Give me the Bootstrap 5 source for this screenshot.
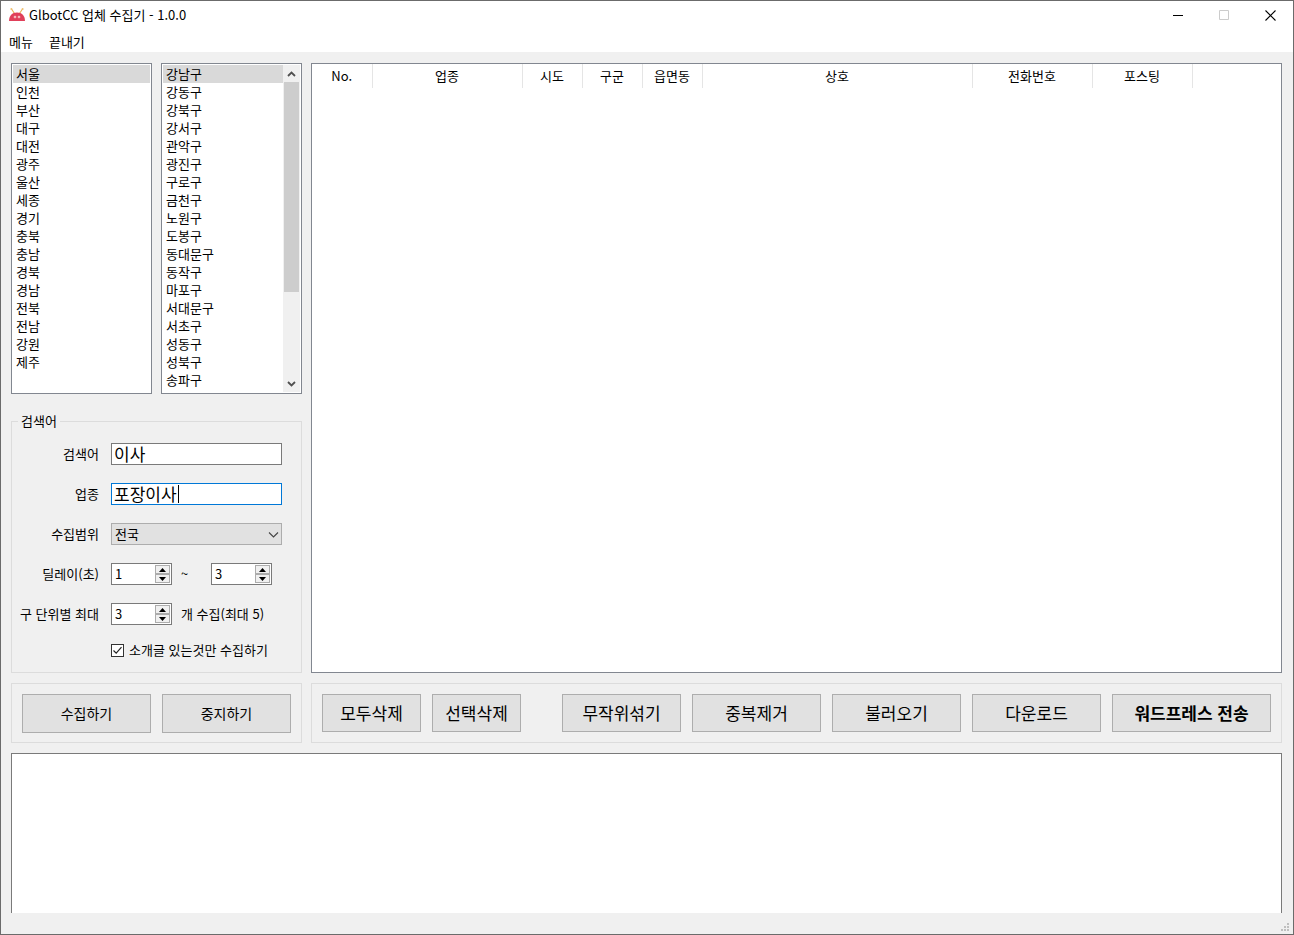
<!DOCTYPE html>
<html lang="ko">
<head>
<meta charset="utf-8">
<meta name="viewport" content="width=device-width, initial-scale=1">
<title>GlbotCC 업체 수집기 - 1.0.0</title>
<link href="https://cdn.jsdelivr.net/npm/bootstrap@5.3.0/dist/css/bootstrap.min.css" rel="stylesheet">
<style>
  body { font: 13px/18px "Noto Sans CJK KR", sans-serif; color: #000; background: #f0f0f0; }
  button, input, select { font: inherit; color: inherit; }
  .app-window { min-height: 100vh; border: 1px solid #6b6b6b; }
  .title-bar { height: 28px; padding-left: 8px; }
  .title-bar h1 { font-size: 13px; line-height: 18px; font-weight: 400; }
  .win-btn { width: 46px; height: 28px; background: none; border: 0; }
  .menu-bar { height: 23px; padding: 2px 0 0 8px; gap: 16px; }
  .menu-bar a { color: #000; text-decoration: none; }
  .workspace { display: grid; grid-template-columns: 291px minmax(0, 1fr); grid-template-rows: 1fr auto auto; gap: 10px 9px; padding: 11px 11px 0 10px; }
  .sunken { background: #fff; border: 1px solid #828790; }
  .region-row { flex: 1 1 240px; min-height: 0; gap: 9px; }
  .region-list { flex: 1 1 0; min-width: 0; padding: 1px; overflow: hidden; }
  .region-scroll { position: relative; overflow-y: auto; scrollbar-width: none; height: 0; min-height: 100%; }
  .region-scroll::-webkit-scrollbar { display: none; }
  .region-list .list-group-item { border: 0; padding: 0 3px; color: #000; background: none; line-height: 18px; text-align: left; }
  .region-list .list-group-item.active { background: #d9d9d9; }
  .scroll-track { width: 17px; background: #f0f0f0; }
  .scroll-track button { height: 17px; padding: 0; border: 0; background: none; line-height: 0; }
  .scroll-thumb { width: 15px; height: 210px; background: #cdcdcd; }
  .search-box { margin-top: 18px; border: 1px solid #dcdcdc; padding: 13px 19px 13px 0; }
  .search-box legend { font-size: 13px; line-height: 18px; margin-left: 6px; padding: 0 3px; }
  .form-line { display: grid; grid-template-columns: 87px 1fr; column-gap: 12px; align-items: center; margin-bottom: 18px; }
  .form-line > label { text-align: right; white-space: nowrap; }
  .field { height: 22px; width: 100%; border: 1px solid #7a7a7a; border-radius: 0; background: #fff; padding: 0 3px; outline: 0; }
  .field-lg { font-size: 17px; line-height: 20px; padding: 0 2px 1px; }
  .field-focus { border-color: #0078d7; }
  .caret-bar { left: 67px; top: 2px; width: 1px; height: 18px; background: #000; }
  .scope { border: 1px solid #adadad; background: #e1e1e1; appearance: none; }
  .scope-arrow { right: 3px; top: 8px; pointer-events: none; }
  .spin { width: 61px; height: 22px; border: 1px solid #7a7a7a; background: #fff; padding: 1px; }
  .spin input { width: 42px; min-width: 0; border: 0; padding: 0 2px; outline: 0; appearance: textfield; -moz-appearance: textfield; background: none; }
  .spin input::-webkit-inner-spin-button { appearance: none; margin: 0; }
  .spin-btns { width: 15px; }
  .spin-btns button { flex: 1; display: flex; align-items: center; justify-content: center; min-height: 0; padding: 0; border: 1px solid #acacac; background: #f0f0f0; line-height: 0; }
  .tilde { width: 39px; padding-left: 9px; }
  .cap-note { padding-left: 9px; }
  .only-intro { margin: -2px 0 0 99px; gap: 5px; }
  .only-intro input { appearance: none; width: 13px; height: 13px; margin: 0; border: 1px solid #333; background: #fff url("data:image/svg+xml,%3Csvg xmlns='http://www.w3.org/2000/svg' viewBox='0 0 11 11'%3E%3Cpath d='M1.5 5.5l2.7 2.7 5.3-6' fill='none' stroke='%23222' stroke-width='1.2'/%3E%3C/svg%3E"); }
  .only-intro input:not(:checked) { background-image: none; }
  .panel { border: 1px solid #dcdcdc; padding: 10px 10px 9px; gap: 11px; }
  .tool { height: 38px; border: 1px solid #adadad; border-radius: 0; background: #e1e1e1; padding: 0; color: #000; white-space: nowrap; font-size: 17px; line-height: 24px; flex: 1 1 129px; }
  .tool-sm { height: 39px; font-size: 14px; padding-bottom: 2px; }
  .w-a { flex-basis: 99px; } .w-b { flex-basis: 89px; } .w-c { flex-basis: 119px; margin-left: 30px; } .w-d { flex-basis: 159px; }
  .results { table-layout: fixed; width: 100%; }
  .results th { height: 24px; padding: 0; font-weight: 400; text-align: center; border-right: 1px solid #e5e5e5; white-space: nowrap; }
  .results th:last-child { border: 0; }
  .log { grid-column: 1 / -1; height: 160px; resize: none; outline: 0; border: 1px solid #7a7a7a; border-bottom: 0; background: #fff; }
  .status { height: 21px; padding: 0 3px 2px 0; }
</style>
</head>
<body>
<div class="app-window d-flex flex-column">
  <header class="bg-white">
    <div class="title-bar d-flex align-items-center">
      <svg width="16" height="16" viewBox="0 0 16 16" aria-hidden="true">
        <path d="M2.500 2l3 4.500M13.500 2l-3 4.500" stroke="#e9b45b" stroke-width="1.200"/>
        <circle cx="2.400" cy="2" r="1" fill="#f0c070"/><circle cx="13.600" cy="2" r="1" fill="#f0c070"/>
        <path d="M0 14C.2 8.500 3 5.500 8 5.500s7.800 3 8 8.500z" fill="#e0405a"/>
        <circle cx="6" cy="10" r="1.300" fill="#fbd3d3"/><circle cx="10" cy="10" r="1.300" fill="#fbd3d3"/>
        <circle cx="6" cy="10" r=".5" fill="#e0405a"/><circle cx="10" cy="10" r=".5" fill="#e0405a"/>
      </svg>
      <h1 class="mb-0 ms-1 me-auto">GlbotCC 업체 수집기 - 1.0.0</h1>
      <button class="win-btn" aria-label="최소화"><svg width="10" height="10" class="d-block mx-auto"><path d="M0 5.500h10" stroke="#000"/></svg></button>
      <button class="win-btn" aria-label="최대화" disabled><svg width="10" height="10" class="d-block mx-auto"><path d="M.5.5h9v9h-9z" fill="none" stroke="#ccc"/></svg></button>
      <button class="win-btn" aria-label="닫기"><svg width="11" height="11" class="d-block mx-auto"><path d="M.5.5l10 10M10.500.5l-10 10" stroke="#000" stroke-width="1.100"/></svg></button>
    </div>
    <nav class="menu-bar d-flex align-items-center"><a href="#">메뉴</a><a href="#">끝내기</a></nav>
  </header>

  <main class="workspace flex-grow-1">
    <div class="d-flex flex-column">
      <div class="region-row d-flex">
        <div class="region-list sunken">
          <div class="region-scroll list-group rounded-0 flex-nowrap">
            <button class="list-group-item active">서울</button><button class="list-group-item">인천</button><button class="list-group-item">부산</button><button class="list-group-item">대구</button><button class="list-group-item">대전</button><button class="list-group-item">광주</button><button class="list-group-item">울산</button><button class="list-group-item">세종</button><button class="list-group-item">경기</button><button class="list-group-item">충북</button><button class="list-group-item">충남</button><button class="list-group-item">경북</button><button class="list-group-item">경남</button><button class="list-group-item">전북</button><button class="list-group-item">전남</button><button class="list-group-item">강원</button><button class="list-group-item">제주</button>
          </div>
        </div>
        <div class="region-list sunken d-flex">
          <div class="region-scroll list-group rounded-0 flex-nowrap flex-grow-1">
            <button class="list-group-item active">강남구</button><button class="list-group-item">강동구</button><button class="list-group-item">강북구</button><button class="list-group-item">강서구</button><button class="list-group-item">관악구</button><button class="list-group-item">광진구</button><button class="list-group-item">구로구</button><button class="list-group-item">금천구</button><button class="list-group-item">노원구</button><button class="list-group-item">도봉구</button><button class="list-group-item">동대문구</button><button class="list-group-item">동작구</button><button class="list-group-item">마포구</button><button class="list-group-item">서대문구</button><button class="list-group-item">서초구</button><button class="list-group-item">성동구</button><button class="list-group-item">성북구</button><button class="list-group-item">송파구</button>
          </div>
          <div class="scroll-track d-flex flex-column align-items-center">
            <button aria-label="위로"><svg width="9" height="6"><path d="M1 5l3.500-3.500L8 5" fill="none" stroke="#505050" stroke-width="1.800"/></svg></button>
            <div class="scroll-thumb"></div>
            <button class="mt-auto" aria-label="아래로"><svg width="9" height="6"><path d="M1 1l3.500 3.500L8 1" fill="none" stroke="#505050" stroke-width="1.800"/></svg></button>
          </div>
        </div>
      </div>

      <fieldset class="search-box">
        <legend class="float-none w-auto mb-0">검색어</legend>
        <div class="form-line"><label for="kw">검색어</label><input id="kw" class="field field-lg" value="이사"></div>
        <div class="form-line"><label for="biz">업종</label>
          <div class="position-relative d-flex"><input id="biz" class="field field-lg field-focus" value="포장이사"><span class="caret-bar position-absolute"></span></div></div>
        <div class="form-line"><label for="scope">수집범위</label>
          <div class="position-relative d-flex"><select id="scope" class="field scope"><option>전국</option></select>
            <svg class="scope-arrow position-absolute" width="11" height="8"><path d="M1 1.500l4.500 4.500L10 1.500" fill="none" stroke="#444" stroke-width="1.100"/></svg></div></div>
        <div class="form-line"><label for="dmin">딜레이(초)</label>
          <div class="d-flex align-items-center">
            <div class="spin d-flex"><input id="dmin" type="number" value="1">
              <div class="spin-btns d-flex flex-column"><button aria-label="증가"><svg width="7" height="4"><path d="M0 4l3.500-4L7 4z"/></svg></button><button aria-label="감소"><svg width="7" height="4"><path d="M0 0l3.500 4L7 0z"/></svg></button></div></div>
            <span class="tilde">~</span>
            <div class="spin d-flex"><input aria-label="최대 딜레이" type="number" value="3">
              <div class="spin-btns d-flex flex-column"><button aria-label="증가"><svg width="7" height="4"><path d="M0 4l3.500-4L7 4z"/></svg></button><button aria-label="감소"><svg width="7" height="4"><path d="M0 0l3.500 4L7 0z"/></svg></button></div></div>
          </div></div>
        <div class="form-line"><label for="cap">구 단위별 최대</label>
          <div class="d-flex align-items-center">
            <div class="spin d-flex"><input id="cap" type="number" value="3" max="5">
              <div class="spin-btns d-flex flex-column"><button aria-label="증가"><svg width="7" height="4"><path d="M0 4l3.500-4L7 4z"/></svg></button><button aria-label="감소"><svg width="7" height="4"><path d="M0 0l3.500 4L7 0z"/></svg></button></div></div>
            <label for="cap" class="cap-note text-nowrap">개 수집(최대 5)</label>
          </div></div>
        <div class="only-intro d-flex align-items-center text-nowrap"><input id="intro" type="checkbox" checked><label for="intro">소개글 있는것만 수집하기</label></div>
      </fieldset>
    </div>

    <section class="sunken">
      <table class="results">
        <colgroup><col style="width:60px"><col style="width:150px"><col style="width:60px"><col style="width:60px"><col style="width:60px"><col style="width:270px"><col style="width:120px"><col style="width:100px"><col></colgroup>
        <thead><tr><th>No.</th><th>업종</th><th>시도</th><th>구군</th><th>읍면동</th><th>상호</th><th>전화번호</th><th>포스팅</th><th></th></tr></thead>
      </table>
    </section>

    <div class="panel d-flex">
      <button class="tool tool-sm">수집하기</button><button class="tool tool-sm">중지하기</button>
    </div>
    <div class="panel d-flex">
      <button class="tool w-a">모두삭제</button><button class="tool w-b">선택삭제</button><button class="tool w-c">무작위섞기</button><button class="tool">중복제거</button><button class="tool">불러오기</button><button class="tool">다운로드</button><button class="tool w-d fw-bold">워드프레스 전송</button>
    </div>
    <textarea class="log" aria-label="로그"></textarea>
  </main>

  <footer class="status d-flex justify-content-end align-items-end">
    <svg width="9" height="9" fill="#bfbfbf" aria-hidden="true"><path d="M6 0h2v2H6zM3 3h2v2H3zM6 3h2v2H6zM0 6h2v2H0zM3 6h2v2H3zM6 6h2v2H6z"/></svg>
  </footer>
</div>
<script src="https://cdn.jsdelivr.net/npm/bootstrap@5.3.0/dist/js/bootstrap.bundle.min.js"></script>
</body>
</html>
